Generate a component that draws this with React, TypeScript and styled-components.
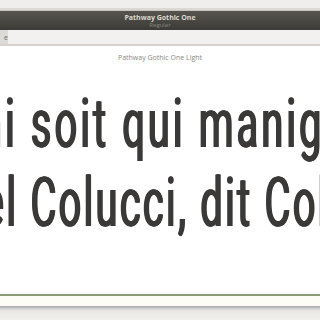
import styled, { createGlobalStyle } from "styled-components";

const GlobalStyle = createGlobalStyle`
  html, body {
    margin: 0;
    padding: 0;
    background: #ffffff;
  }
  #root {
    width: 320px;
    height: 320px;
    overflow: hidden;
  }
`;

const Window = styled.div`
  display: flex;
  flex-direction: column;
  width: 320px;
  height: 320px;
  overflow: hidden;
  background: #ffffff;
`;

const TopStrip = styled.div`
  height: 8px;
  background: #efeeec;
  border-bottom: 2px solid #dbd8d4;
  box-shadow: 0 1px 0 #c8c5c0;
`;

const TitleBar = styled.div`
  height: 19px;
  margin-top: 1px;
  display: flex;
  flex-direction: column;
  align-items: center;
  justify-content: center;
  background: linear-gradient(#56544d, #3c3b37);
  font-family: "Open Sans", "DejaVu Sans", sans-serif;
  line-height: 1;
`;

const Title = styled.div`
  font-size: 7px;
  font-weight: 700;
  color: #dcd8cf;
`;

const Subtitle = styled.div`
  font-size: 6px;
  color: #88857e;
  margin-top: 1px;
`;

const Toolbar = styled.div`
  height: 14px;
  display: flex;
  background: #f2f1ef;
  border-bottom: 2px solid #d6d3cf;
`;

const Tab = styled.div`
  width: 8px;
  display: flex;
  align-items: center;
  justify-content: flex-end;
  background: #dddbd7;
  font-family: "Open Sans", "DejaVu Sans", sans-serif;
  font-size: 7px;
  color: #6d6a66;
  overflow: hidden;
`;

const Content = styled.div`
  flex: 1;
  display: flex;
  flex-direction: column;
  align-items: center;
`;

const FontName = styled.div`
  margin-top: 7px;
  font-family: "Open Sans", "DejaVu Sans", sans-serif;
  font-size: 7px;
  line-height: 10px;
  color: #8a8885;
`;

const Sample = styled.div`
  align-self: stretch;
  display: flex;
  flex-direction: column;
  margin-top: 22px;
  overflow: hidden;
`;

// condensed look: narrow the glyphs, then thicken only the vertical stems
const Line = styled.div<{ $shift: number; $spacing: number }>`
  white-space: nowrap;
  margin-left: ${(p) => p.$shift}px;
  font-family: Roboto, "Liberation Sans", sans-serif;
  font-weight: 400;
  font-size: 68px;
  line-height: 79px;
  letter-spacing: ${(p) => p.$spacing}px;
  color: #3b3937;
  text-shadow: 1px 0 0 #3b3937, 2px 0 0 #3b3937, 3px 0 0 #3b3937;
  transform: scaleX(0.58);
  transform-origin: left center;
`;

const Spacer = styled.div`
  flex: 1;
`;

const BottomBar = styled.div`
  height: 10px;
  background: #fdfdf6;
  border-top: 2px solid #8c9c72;
`;

const Footer = styled.div`
  height: 14px;
  background: linear-gradient(#a8a8a8 0px, #d6d6d6 3px, #ebe8e5 5px, #f1efec 100%);
`;

export default function App() {
  return (
    <Window>
      <GlobalStyle />
      <TopStrip />
      <TitleBar>
        <Title>Pathway Gothic One</Title>
        <Subtitle>Regular</Subtitle>
      </TitleBar>
      <Toolbar>
        <Tab>e</Tab>
      </Toolbar>
      <Content>
        <FontName>Pathway Gothic One Light</FontName>
        <Sample>
          <Line $shift={-103} $spacing={5.6}>Honni soit qui manigance</Line>
          <Line $shift={-114} $spacing={4.2}>Michel Colucci, dit Coluche</Line>
        </Sample>
        <Spacer />
      </Content>
      <BottomBar />
      <Footer />
    </Window>
  );
}
